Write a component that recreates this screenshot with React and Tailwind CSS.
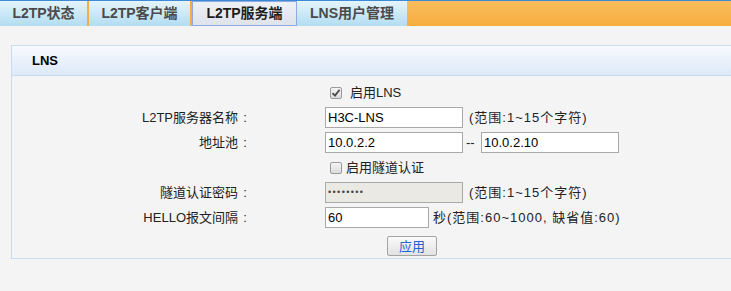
import React from 'react';

const font = { fontFamily: '"Liberation Sans", "Noto Sans CJK SC", sans-serif' };

const tabs = [
  { name: 'L2TP状态', w: 'w-[89px]' },
  { name: 'L2TP客户端', w: 'w-[103px]' },
  { name: 'L2TP服务端', w: 'w-[105px]', active: true },
  { name: 'LNS用户管理', w: 'w-[110px]' },
];

const Checkbox = ({ checked }) => (
  <span className="w-[12px] h-[12px] rounded-[2px] border border-[#9a9a9a] bg-gradient-to-b from-[#f4f4f4] to-[#dcdcdc] flex items-center justify-center">
    {checked && (
      <svg width="10" height="10" viewBox="0 0 10 10">
        <path d="M1.5 5.2 L4 7.6 L8.6 1.8" fill="none" stroke="#4a4a4a" strokeWidth="1.8" />
      </svg>
    )}
  </span>
);

// label ends with a centred full-width colon
const Label = ({ children }) => (
  <div className="w-[240px] flex justify-end text-[13px] text-[#222] mr-[73px]">
    <span>{children}</span>
    <span className="w-[14px] text-center">:</span>
  </div>
);

const Input = ({ value, w = 'w-[138px]', disabled }) => (
  <div
    className={`${w} h-[21px] border border-[#a9a9a9] flex items-center pl-[2px] text-[13px] text-black ${disabled ? 'bg-[#ebe9e3]' : 'bg-white'}`}
  >
    {value}
  </div>
);

export default function App() {
  return (
    <div className="w-[731px] h-[291px] bg-[#f4f4f4] overflow-hidden" style={font}>
      <div className="h-[26px] flex border-t border-[#3d8ad6] bg-gradient-to-b from-[#f9bd5c] to-[#f6ae3e]">
        {tabs.map((t, i) =>
          t.active ? (
            <div
              key={t.name}
              className={`${t.w} h-full flex items-center justify-center text-[14px] font-bold text-[#1e1e1e] bg-gradient-to-b from-[#eef1f5] to-[#dfe3ea] border border-[#8eaae6]`}
            >
              {t.name}
            </div>
          ) : (
            <div
              key={t.name}
              className={`${t.w} h-full flex items-center justify-center text-[14px] font-bold text-[#4a4a4a] bg-gradient-to-b from-[#e4f4fb] to-[#b2ddf1] ${i < 2 ? 'border-r-2 border-[#f6ae3e]' : ''}`}
            >
              {t.name}
            </div>
          )
        )}
      </div>

      <div className="pl-[11px] pt-[19px]">
        <div className="border-l border-t border-b border-[#c6ddf1]">
          <div className="h-[30px] flex items-center pl-[20px] text-[13px] font-bold text-black bg-gradient-to-b from-[#f7f9fe] to-[#dde9f8] border-b border-[#c6ddf1]">
            LNS
          </div>

          <div className="pb-[2px]">
            <div className="mt-[7px] h-[20px] flex items-center">
              <div className="w-[318px]" />
              <Checkbox checked />
              <span className="ml-[8px] text-[13px] text-[#222]">启用LNS</span>
            </div>

            <div className="mt-[4px] h-[21px] flex items-center">
              <Label>L2TP服务器名称</Label>
              <Input value="H3C-LNS" />
              <span className="ml-[6px] text-[13px] tracking-[1px] text-[#222]">(范围:1~15个字符)</span>
            </div>

            <div className="mt-[4px] h-[21px] flex items-center">
              <Label>地址池</Label>
              <Input value="10.0.2.2" />
              <span className="w-[18px] pl-[3px] text-[13px] text-[#222]">--</span>
              <Input value="10.0.2.10" />
            </div>

            <div className="mt-[5px] h-[20px] flex items-center">
              <div className="w-[318px]" />
              <Checkbox />
              <span className="ml-[4px] text-[13px] text-[#222]">启用隧道认证</span>
            </div>

            <div className="mt-[4px] h-[21px] flex items-center">
              <Label>隧道认证密码</Label>
              <Input value={<span className="text-[9px] tracking-[1.4px] text-[#444]">••••••••</span>} disabled />
              <span className="ml-[6px] text-[13px] tracking-[1px] text-[#222]">(范围:1~15个字符)</span>
            </div>

            <div className="mt-[4px] h-[21px] flex items-center">
              <Label>HELLO报文间隔</Label>
              <Input value="60" w="w-[104px]" />
              <span className="ml-[4px] text-[13px] tracking-[1px] text-[#222]">秒(范围:60~1000, 缺省值:60)</span>
            </div>

            <div className="mt-[8px] h-[20px] flex items-center">
              <div className="w-[375px]" />
              <button className="w-[50px] h-[20px] border border-[#a3a3a3] rounded-[2px] bg-gradient-to-b from-[#fafafa] to-[#e2e2e2] text-[13px] text-[#1f63d6] leading-none">
                应用
              </button>
            </div>
          </div>
        </div>
      </div>
    </div>
  );
}
